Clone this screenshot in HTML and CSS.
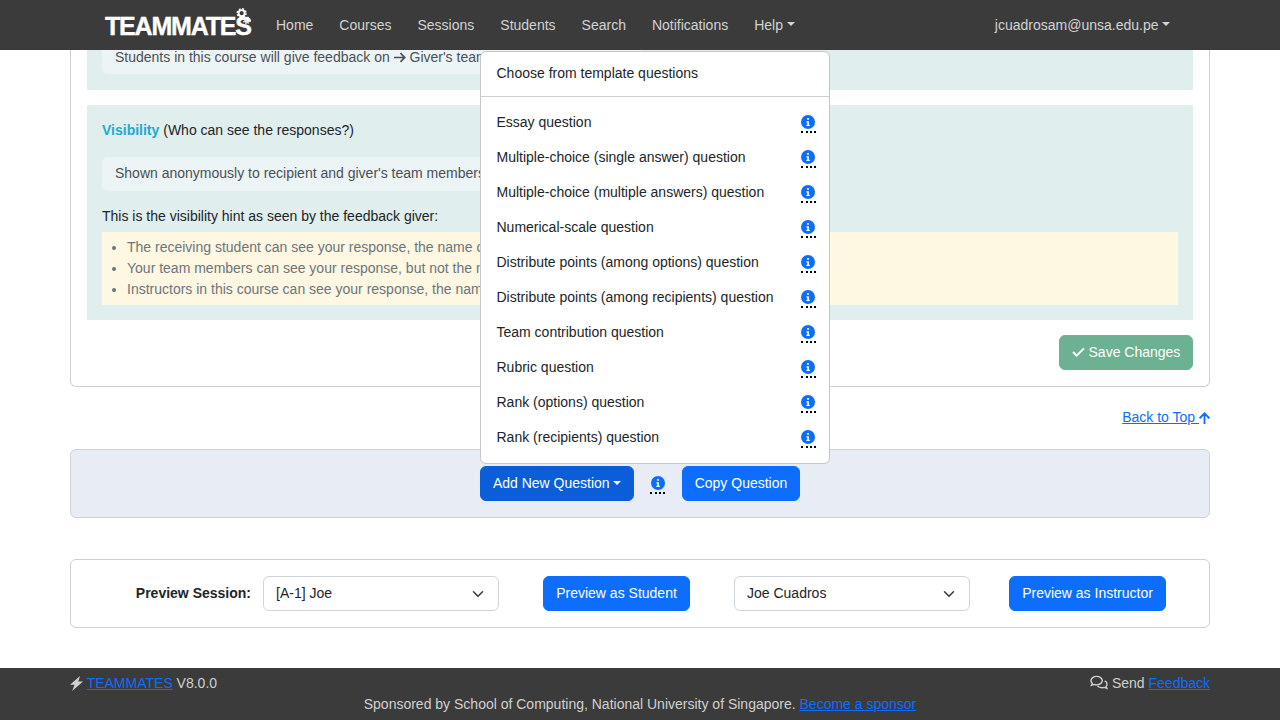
FILE: index.html
```html
<!DOCTYPE html>
<html lang="en">
<head>
    <meta charset="UTF-8">
    <meta name="viewport" content="width=device-width, initial-scale=1.0">
    <title>TEAMMATES - Edit Session</title>
    <link rel="stylesheet" href="styles.css">
</head>
<body>
    <svg class="sprite" aria-hidden="true">
        <symbol id="icon-info" viewBox="0 0 16 16">
            <circle cx="8" cy="8" r="8" fill="#0d6efd"/>
            <rect x="7" y="3.500" width="2" height="2" fill="#fff"/>
            <path d="M6.200 7h2.800v4h1v1.500H6.200V11h1V8.500h-1z" fill="#fff"/>
        </symbol>
    </svg>

    <nav class="navbar">
        <a class="brand" href="#">
            <span class="brand-text">TEAMMATES</span>
            <svg class="brand-gears" viewBox="0 0 18 20" fill="none" stroke="#fff">
                <circle cx="7" cy="6.500" r="3.200" stroke-width="2"/>
                <circle cx="7" cy="6.500" r="4.700" stroke-width="1.600" stroke-dasharray="2 1.700"/>
                <circle cx="12.500" cy="14" r="2" stroke-width="1.400"/>
                <circle cx="12.500" cy="14" r="3.400" stroke-width="1.300" stroke-dasharray="1.600 1.100"/>
            </svg>
        </a>
        <a class="nav-link" href="#">Home</a>
        <a class="nav-link" href="#">Courses</a>
        <a class="nav-link" href="#">Sessions</a>
        <a class="nav-link" href="#">Students</a>
        <a class="nav-link" href="#">Search</a>
        <a class="nav-link" href="#">Notifications</a>
        <a class="nav-link caret" href="#">Help</a>
        <a class="nav-link nav-user caret" href="#">jcuadrosam@unsa.edu.pe</a>
    </nav>

    <main class="content">
        <div class="card question-card">
            <div class="section section-first">
                <div class="pill">Students in this course will give feedback on
                    <svg class="icon-arrow" viewBox="0 0 14 12" fill="none" stroke="#495057" stroke-width="2"><path d="M0 6h12M7.500 1l5 5-5 5"/></svg>
                    Giver's team members</div>
            </div>
            <div class="section">
                <div class="section-title"><b>Visibility</b> (Who can see the responses?)</div>
                <div class="pill pill-spaced">Shown anonymously to recipient and giver's team members</div>
                <div class="hint-title">This is the visibility hint as seen by the feedback giver:</div>
                <ul class="hint-list">
                    <li>The receiving student can see your response, the name of your team, but not your name.</li>
                    <li>Your team members can see your response, but not the name of the recipient, or your name.</li>
                    <li>Instructors in this course can see your response, the name of the recipient, and your name.</li>
                </ul>
            </div>
            <div class="card-actions">
                <button class="btn btn-save">
                    <svg class="icon-check" viewBox="0 0 14 11" fill="none" stroke="#fff" stroke-width="2.200"><path d="M1 5.500l4 4 8-8"/></svg>
                    Save Changes</button>
            </div>
        </div>

        <div class="back-top">
            <a href="#">Back to Top </a><svg class="icon-up" viewBox="0 0 12 13" fill="none" stroke="#0d6efd" stroke-width="2"><path d="M6 13V1.500M.7 6.800L6 1.500l5.300 5.300"/></svg>
        </div>

        <div class="card add-panel">
            <div class="dropdown">
                <button class="btn btn-active caret">Add New Question</button>
                <div class="dropdown-menu">
                    <div class="menu-item">Choose from template questions</div>
                    <hr class="menu-divider">
                    <div class="menu-item">Essay question <span class="info"><svg><use href="#icon-info"/></svg></span></div>
                    <div class="menu-item">Multiple-choice (single answer) question <span class="info"><svg><use href="#icon-info"/></svg></span></div>
                    <div class="menu-item">Multiple-choice (multiple answers) question <span class="info"><svg><use href="#icon-info"/></svg></span></div>
                    <div class="menu-item">Numerical-scale question <span class="info"><svg><use href="#icon-info"/></svg></span></div>
                    <div class="menu-item">Distribute points (among options) question <span class="info"><svg><use href="#icon-info"/></svg></span></div>
                    <div class="menu-item">Distribute points (among recipients) question <span class="info"><svg><use href="#icon-info"/></svg></span></div>
                    <div class="menu-item">Team contribution question <span class="info"><svg><use href="#icon-info"/></svg></span></div>
                    <div class="menu-item">Rubric question <span class="info"><svg><use href="#icon-info"/></svg></span></div>
                    <div class="menu-item">Rank (options) question <span class="info"><svg><use href="#icon-info"/></svg></span></div>
                    <div class="menu-item">Rank (recipients) question <span class="info"><svg><use href="#icon-info"/></svg></span></div>
                </div>
            </div>
            <span class="info info-bar"><svg><use href="#icon-info"/></svg></span>
            <button class="btn btn-copy">Copy Question</button>
        </div>

        <div class="card preview-panel">
            <label class="preview-label">Preview Session:</label>
            <select class="select">
                <option>[A-1] Joe</option>
            </select>
            <button class="btn btn-student">Preview as Student</button>
            <select class="select">
                <option>Joe Cuadros</option>
            </select>
            <button class="btn btn-instructor">Preview as Instructor</button>
        </div>
    </main>

    <footer class="footer">
        <div class="footer-row">
            <div>
                <svg class="icon-bolt" viewBox="0 0 13 15"><path d="M10 0L0 8.800h4.500L2.200 15 13 5.500H8.300z" fill="#d0d0d0"/></svg>
                <a href="#">TEAMMATES</a> V8.0.0
            </div>
            <div>
                <svg class="icon-comments" viewBox="0 0 19 15" fill="none" stroke="#d0d0d0" stroke-width="1.500"><path d="M7 1C3.700 1 1 3 1 5.500c0 1.100.5 2 1.300 2.800L1.500 10.500l2.800-1c.8.300 1.700.5 2.700.5 3.300 0 6-2 6-4.500S10.300 1 7 1z"/><path d="M15.500 5.800c1.500.7 2.500 2 2.500 3.400 0 .9-.4 1.700-1 2.400l.8 2.100-2.700-1c-.8.300-1.600.4-2.500.4-2 0-3.800-.8-4.800-2"/></svg>
                Send <a href="#">Feedback</a>
            </div>
        </div>
        <div class="footer-sponsor">Sponsored by School of Computing, National University of Singapore. <a href="#">Become a sponsor</a></div>
    </footer>
</body>
</html>
```

FILE: styles.css
```css
* {
    box-sizing: border-box;
}
html, body {
    height: 720px;
    overflow: hidden;
}
body {
    margin: 0;
    display: flex;
    flex-direction: column;
    font-family: "Liberation Sans", Arial, sans-serif;
    font-size: 14px;
    line-height: 21px;
    color: #212529;
    background: #fff;
}
a {
    color: #0d6efd;
}
.sprite {
    display: none;
}

/* navbar */
.navbar {
    position: relative;
    z-index: 2;
    flex: none;
    display: flex;
    align-items: center;
    height: 50px;
    padding: 0 110px 0 105px;
    background: #3b3b3b;
}
.brand {
    position: relative;
    display: block;
    width: 158px;
    height: 50px;
    text-decoration: none;
}
.brand-text {
    position: absolute;
    left: 0;
    top: 12px;
    font-size: 25px;
    line-height: 28px;
    font-weight: bold;
    letter-spacing: -1.200px;
    color: #fff;
    -webkit-text-stroke: 0.400px #fff;
}
.brand-gears {
    position: absolute;
    left: 130px;
    top: 7px;
    width: 17px;
    height: 19px;
}
.nav-link {
    padding: 0 13px;
    color: rgba(255, 255, 255, 0.78);
    text-decoration: none;
}
.nav-user {
    margin-left: auto;
    padding: 0;
}
.caret::after {
    content: "";
    display: inline-block;
    margin-left: 3.500px;
    vertical-align: 3.500px;
    border-top: 4.200px solid;
    border-right: 4.200px solid transparent;
    border-left: 4.200px solid transparent;
}

/* page */
.content {
    flex: none;
    width: 1140px;
    margin: 0 auto;
}
.card {
    border: 1px solid #d0d0d0;
    border-radius: 6px;
    background: #fff;
}
.question-card {
    height: 337px;
    padding: 0 16px;
    border-top: 0;
    border-top-left-radius: 0;
    border-top-right-radius: 0;
}
.section {
    margin-bottom: 15px;
    padding: 15px;
    background: #e0eeed;
}
.section-first {
    height: 40px;
    padding-top: 0;
    padding-bottom: 0;
}
.pill {
    width: 540px;
    height: 34px;
    padding: 6px 13px;
    border-radius: 6px;
    background: #edf4f5;
    color: #495057;
    white-space: nowrap;
}
.section-first .pill {
    height: 24px;
    padding-top: 0;
    padding-bottom: 0;
    line-height: 15px;
    border-top-left-radius: 0;
    border-top-right-radius: 0;
}
.pill-spaced {
    margin-top: 16px;
}
.icon-arrow {
    width: 12px;
    height: 11px;
    vertical-align: -1px;
}
.section-title b {
    color: #25a9cf;
}
.hint-title {
    margin-top: 15px;
}
.hint-list {
    margin: 5px 0 0;
    padding: 5px 0 5px 25px;
    background: #fef7e2;
    color: #6c757d;
    white-space: nowrap;
}
.card-actions {
    display: flex;
    justify-content: flex-end;
}

/* buttons */
.btn {
    height: 35px;
    padding: 0;
    border: 1px solid #0d6efd;
    border-radius: 6px;
    background: #0d6efd;
    color: #fff;
    font: inherit;
    white-space: nowrap;
}
.btn-active {
    width: 154px;
    background: #0b5ed7;
    border-color: #0b5ed7;
}
.btn-copy {
    width: 118px;
}
.btn-save {
    width: 134px;
    background: #6bb192;
    border-color: #6bb192;
}
.icon-check {
    width: 13px;
    height: 10px;
}
.back-top {
    display: flex;
    justify-content: flex-end;
    align-items: center;
    height: 21px;
    margin-top: 20px;
}
.back-top a {
    white-space: pre;
}
.icon-up {
    width: 11px;
    height: 12px;
}

/* add question bar */
.add-panel {
    display: flex;
    justify-content: center;
    align-items: center;
    gap: 16px;
    height: 69px;
    margin-top: 21px;
    background: #e8edf5;
}
.dropdown {
    position: relative;
}
.dropdown-menu {
    position: absolute;
    left: 0;
    bottom: calc(100% + 2px);
    z-index: 1;
    width: 350px;
    padding: 4px 0 8px;
    border: 1px solid #c4c6c9;
    border-radius: 6px;
    background: #fff;
}
.menu-item {
    display: flex;
    justify-content: space-between;
    align-items: center;
    height: 35px;
    padding: 0 13.500px 0 15.500px;
}
.menu-divider {
    height: 1px;
    margin: 5px 0 8px;
    border: 0;
    background: #ced0d2;
}
.info {
    display: inline-flex;
    width: 15px;
    height: 18px;
    margin-top: 3px;
    border-bottom: 2px dotted #000;
}
.info-bar {
    margin-right: 1px;
}
.info svg {
    width: 14px;
    height: 14px;
    margin-left: 0.500px;
}

/* preview */
.preview-panel {
    display: flex;
    align-items: center;
    height: 69px;
    margin-top: 41px;
}
.preview-label {
    width: 180px;
    margin-right: 12px;
    text-align: right;
    font-weight: bold;
}
.select {
    width: 236px;
    height: 35px;
    padding: 0 12px;
    border: 1px solid #ced4da;
    border-radius: 6px;
    color: #212529;
    font: inherit;
    appearance: none;
    background: #fff url("data:image/svg+xml,%3csvg xmlns='http://www.w3.org/2000/svg' viewBox='0 0 16 16'%3e%3cpath fill='none' stroke='%23343a40' stroke-linecap='round' stroke-linejoin='round' stroke-width='2' d='M2 5l6 6 6-6'/%3e%3c/svg%3e") no-repeat right 14px center / 12px 12px;
}
.btn-student {
    width: 147px;
    margin: 0 44px;
}
.btn-instructor {
    width: 157px;
    margin-left: 39px;
}

/* footer */
.footer {
    flex: none;
    height: 52px;
    margin-top: auto;
    padding-top: 5px;
    background: #3b3b3b;
    color: #d0d0d0;
}
.footer-row {
    display: flex;
    justify-content: space-between;
    width: 1140px;
    margin: 0 auto;
}
.footer-sponsor {
    text-align: center;
}
.icon-bolt {
    width: 13px;
    height: 15px;
    vertical-align: -3px;
}
.icon-comments {
    width: 18px;
    height: 15px;
    vertical-align: -2px;
}
```
